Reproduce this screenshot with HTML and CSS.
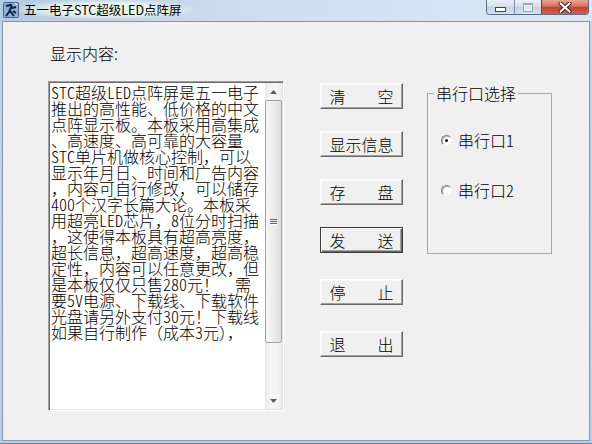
FILE: index.html
```html
<!DOCTYPE html>
<html lang="zh-CN">
<head>
<meta charset="utf-8">
<title>五一电子STC超级LED点阵屏</title>
<link rel="stylesheet" href="styles.css">
</head>
<body>
<div class="window">
  <header class="titlebar">
    <svg class="app-icon" width="16" height="16" viewBox="0 0 16 16">
      <rect x="0.5" y="0.5" width="15" height="15" rx="1" fill="#8fb0d8" stroke="#46628e"/>
      <path d="M3 4 L8 3 L9 6 L13 5" stroke="#10203f" stroke-width="2" fill="none"/>
      <path d="M8 5 L6 10 L3 14 M7 9 L11 14 M10 9 L13 11" stroke="#10203f" stroke-width="2" fill="none"/>
      <path d="M12 1 L14 3" stroke="#ffffff" stroke-width="1"/>
    </svg>
    <span class="title">五一电子STC超级LED点阵屏</span>
    <div class="caption-buttons">
      <span class="cap cap-min"><i class="min-glyph"></i></span>
      <span class="cap cap-max"><i class="max-glyph"></i></span>
      <span class="cap cap-close">
        <svg width="14" height="11" viewBox="0 0 14 11">
          <path d="M2.5 1.5 L11.5 9.5 M11.5 1.5 L2.5 9.5" stroke="#4a1a14" stroke-width="4" stroke-linecap="round"/>
          <path d="M2.5 1.5 L11.5 9.5 M11.5 1.5 L2.5 9.5" stroke="#ffffff" stroke-width="2.2" stroke-linecap="round"/>
        </svg>
      </span>
    </div>
  </header>
  <main class="client">
    <section class="content-col">
      <div class="field-label">显示内容:</div>
      <div class="memo">
        <div class="memo-text">
          <div class="memo-line"><span class="hw">STC</span>超级<span class="hw">LED</span>点阵屏是五一电子</div>
          <div class="memo-line">推出的高性能、低价格的中文</div>
          <div class="memo-line">点阵显示板。本板采用高集成</div>
          <div class="memo-line">、高速度、高可靠的大容量</div>
          <div class="memo-line"><span class="hw">STC</span>单片机做核心控制，可以</div>
          <div class="memo-line">显示年月日、时间和广告内容</div>
          <div class="memo-line">，内容可自行修改，可以储存</div>
          <div class="memo-line"><span class="hw">400</span>个汉字长篇大论。本板采</div>
          <div class="memo-line">用超亮<span class="hw">LED</span>芯片，<span class="hw">8</span>位分时扫描</div>
          <div class="memo-line">，这使得本板具有超高亮度，</div>
          <div class="memo-line">超长信息，超高速度，超高稳</div>
          <div class="memo-line">定性，内容可以任意更改，但</div>
          <div class="memo-line">是本板仅仅只售<span class="hw">280</span>元！　需</div>
          <div class="memo-line">要<span class="hw">5V</span>电源、下载线、下载软件</div>
          <div class="memo-line">光盘请另外支付<span class="hw">30</span>元！下载线</div>
          <div class="memo-line">如果自行制作（成本<span class="hw">3</span>元），</div>
        </div>
        <div class="vscroll">
          <div class="sb-btn">
            <svg width="7" height="4" viewBox="0 0 7 4"><path d="M0 4 L3.5 0 L7 4 Z" fill="#5c5c5c"/></svg>
          </div>
          <div class="sb-thumb"><span class="grip"></span></div>
          <div class="sb-track"></div>
          <div class="sb-btn">
            <svg width="7" height="4" viewBox="0 0 7 4"><path d="M0 0 L3.5 4 L7 0 Z" fill="#5c5c5c"/></svg>
          </div>
        </div>
      </div>
    </section>
    <section class="btn-col">
      <button class="btn" type="button">清　　空</button>
      <button class="btn" type="button">显示信息</button>
      <button class="btn" type="button">存　　盘</button>
      <button class="btn btn-default" type="button">发　　送</button>
      <button class="btn btn-spaced" type="button">停　　止</button>
      <button class="btn btn-spaced" type="button">退　　出</button>
    </section>
    <fieldset class="group">
      <legend class="group-title">串行口选择</legend>
      <label class="radio radio-first"><span class="radio-dot is-checked"></span>串行口1</label>
      <label class="radio radio-second"><span class="radio-dot"></span>串行口2</label>
    </fieldset>
  </main>
</div>
</body>
</html>
```
FILE: styles.css
```css
html, body {
  margin: 0;
  padding: 0;
}
body {
  width: 592px;
  height: 444px;
  overflow: hidden;
  font-family: "Noto Sans CJK SC", "Noto Sans", sans-serif;
  color: #000;
}
.window {
  width: 592px;
  height: 444px;
  box-sizing: border-box;
  padding: 0 2px 2px 2px;
  display: flex;
  flex-direction: column;
  background: linear-gradient(180deg, #cfe0f2 0, #c2d7ee 21px, #b9cfe8 100%);
  border-bottom: 1px solid #6d86a6;
}
.titlebar {
  height: 21px;
  flex: none;
  display: flex;
  align-items: flex-start;
  background: linear-gradient(90deg, #b5cbe3 0, #cfdff0 45%, #dae7f4 100%);
  margin: 0 -2px;
  padding: 0 3px 0 3px;
}
.app-icon {
  flex: none;
  margin-top: 2px;
}
.title {
  margin-left: 0;
  padding: 0 12px 0 5px;
  height: 19px;
  line-height: 19px;
  font-size: 12.5px;
  white-space: nowrap;
  background: radial-gradient(ellipse at 50% 50%, rgba(236, 246, 236, 0.95) 45%, rgba(236, 246, 236, 0) 75%);
}
.caption-buttons {
  margin-left: auto;
  display: flex;
  height: 15px;
  box-sizing: border-box;
  border: 1px solid #5b6d84;
  border-top: none;
  border-radius: 0 0 4px 4px;
  overflow: hidden;
}
.cap {
  display: flex;
  align-items: center;
  justify-content: center;
  height: 100%;
}
.cap-min {
  width: 27px;
  background: linear-gradient(180deg, #e9f0f7 0, #d7e2ee 45%, #c3d2e3 50%, #d6e1ed 100%);
}
.cap-max {
  width: 26px;
  border-left: 1px solid #7f8fa3;
  background: linear-gradient(180deg, #e9f0f7 0, #d7e2ee 45%, #c3d2e3 50%, #d6e1ed 100%);
}
.cap-close {
  width: 46px;
  border-left: 1px solid #7d3a30;
  background: linear-gradient(180deg, #e7a597 0, #d6705e 45%, #c2412e 52%, #cf6450 100%);
}
.min-glyph {
  display: block;
  width: 9px;
  height: 3px;
  margin-top: 5px;
  background: #fff;
  border: 1px solid #3b4656;
}
.max-glyph {
  display: block;
  width: 8px;
  height: 6px;
  border: 1px solid #9aa8b8;
  border-top-width: 2px;
  background: #e4ebf3;
}
.client {
  flex: 1;
  display: flex;
  align-items: flex-start;
  background: #f0f0f0;
  border: 1px solid #8596ac;
  padding-left: 45px;
}
.content-col {
  display: flex;
  flex-direction: column;
  padding-top: 23px;
}
.field-label {
  font-size: 16px;
  line-height: 16px;
  height: 16px;
  padding-left: 2px;
  font-weight: 300;
}
.memo {
  margin-top: 20px;
  width: 236px;
  height: 330px;
  box-sizing: border-box;
  display: flex;
  background: #fff;
  border: 1px solid;
  border-color: #a0a0a0 #ffffff #ffffff #a0a0a0;
  box-shadow: inset 1px 1px 0 #696969, inset -1px -1px 0 #e3e3e3;
  padding: 1px;
}
.memo-text {
  flex: 1;
  min-width: 0;
  padding: 1px 0 0 1px;
  font-size: 16px;
  font-weight: 300;
}
.memo-line {
  height: 16px;
  line-height: 16px;
  white-space: nowrap;
}
.hw {
  display: inline-block;
  height: 16px;
  line-height: 16px;
  font-feature-settings: "hwid" 1;
  vertical-align: baseline;
}
.vscroll {
  width: 17px;
  flex: none;
  display: flex;
  flex-direction: column;
  background: linear-gradient(90deg, #e9e9e9 0, #f5f5f5 30%, #f5f5f5 70%, #ebebeb 100%);
}
.sb-btn {
  height: 17px;
  flex: none;
  display: flex;
  align-items: center;
  justify-content: center;
}
.sb-thumb {
  height: 243px;
  flex: none;
  box-sizing: border-box;
  border: 1px solid #a3a3a3;
  border-radius: 2px;
  background: linear-gradient(90deg, #f6f6f6 0, #ececec 50%, #dedede 100%);
  display: flex;
  align-items: center;
  justify-content: center;
}
.grip {
  display: block;
  width: 7px;
  height: 1px;
  background: #6a6a6a;
  box-shadow: 0 -2px 0 #6a6a6a, 0 2px 0 #6a6a6a, 0 3px 0 #fff;
}
.sb-track {
  flex: 1;
}
.btn-col {
  display: flex;
  flex-direction: column;
  gap: 22px;
  margin-left: 36px;
  padding-top: 61px;
}
.btn {
  width: 83px;
  height: 26px;
  box-sizing: border-box;
  margin: 0;
  padding: 0;
  font-family: "Noto Sans CJK SC", sans-serif;
  font-size: 16px;
  line-height: 16px;
  font-weight: 300;
  color: #000;
  background: #f0f0f0;
  border: 1px solid;
  border-color: #ffffff #696969 #696969 #ffffff;
  box-shadow: inset -1px -1px 0 #a0a0a0, inset 1px 1px 0 #f8f8f8;
  white-space: nowrap;
}
.btn-default {
  border: 1px solid #3c3c3c;
  box-shadow: inset 1px 1px 0 #ffffff, inset -1px -1px 0 #696969, inset -2px -2px 0 #a0a0a0;
}
.btn-spaced {
  margin-top: 4px;
}
.group {
  margin: 62px 0 0 24px;
  width: 125px;
  height: 170px;
  box-sizing: border-box;
  padding: 0 0 0 13px;
  border: 1px solid #a6a6a6;
  min-inline-size: 0;
}
.group-title {
  margin-left: -7px;
  padding: 0 2px;
  font-size: 16px;
  line-height: 18px;
  font-weight: 300;
}
.radio {
  display: flex;
  align-items: center;
  height: 18px;
  font-size: 16px;
  line-height: 18px;
  font-weight: 300;
  font-feature-settings: "hwid" 1;
}
.radio-first {
  margin-top: 29px;
}
.radio-second {
  margin-top: 32px;
}
.radio-dot {
  width: 11px;
  height: 11px;
  box-sizing: border-box;
  margin-right: 6px;
  border-radius: 50%;
  border: 1px solid;
  border-color: #7a7a7a #f4f4f4 #f4f4f4 #7a7a7a;
  background: #ffffff;
  box-shadow: inset 1px 1px 0 #b9b9b9;
  display: flex;
  align-items: center;
  justify-content: center;
}
.radio-dot.is-checked::after {
  content: "";
  width: 3px;
  height: 3px;
  border-radius: 50%;
  background: #000;
}
```
